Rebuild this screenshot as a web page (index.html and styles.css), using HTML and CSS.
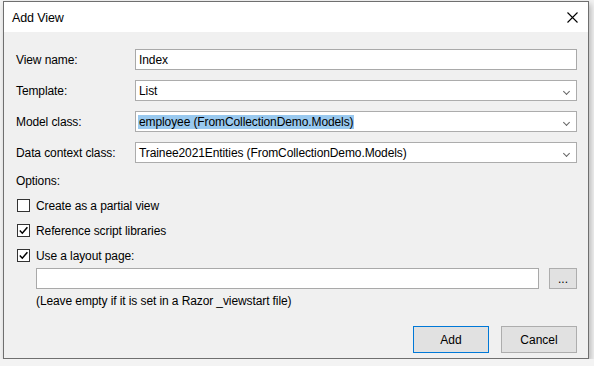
FILE: index.html
```html
<!DOCTYPE html>
<html lang="en">
<head>
  <meta charset="UTF-8">
  <meta name="viewport" content="width=device-width, initial-scale=1">
  <title>Add View</title>
  <link rel="stylesheet" href="styles.css">
</head>
<body>

  <div class="dialog">
    <header class="titlebar">
      <span class="title">Add View</span>
      <svg class="close" width="11" height="11" viewBox="0 0 11 11">
        <path d="M0.5 0.5 L10.5 10.5 M10.5 0.5 L0.5 10.5" stroke="#000" stroke-width="1.1" fill="none"/>
      </svg>
    </header>

    <main class="content">
      <div class="form">
        <label>View name:</label>
        <div class="field">Index</div>

        <label>Template:</label>
        <div class="field select">List<span class="chev"></span></div>

        <label>Model class:</label>
        <div class="field select"><span class="selected">employee (FromCollectionDemo.Models)</span><span class="chev"></span></div>

        <label>Data context class:</label>
        <div class="field select">Trainee2021Entities (FromCollectionDemo.Models)<span class="chev"></span></div>
      </div>

      <div class="options-label">Options:</div>

      <div class="check"><span class="box"></span>Create as a partial view</div>
      <div class="check">
        <span class="box"><svg width="11" height="11" viewBox="0 0 11 11"><path d="M1.8 5.6 L4.3 8.2 L9.4 2.2" stroke="#000" stroke-width="1.5" fill="none"/></svg></span>Reference script libraries
      </div>
      <div class="check">
        <span class="box"><svg width="11" height="11" viewBox="0 0 11 11"><path d="M1.8 5.6 L4.3 8.2 L9.4 2.2" stroke="#000" stroke-width="1.5" fill="none"/></svg></span>Use a layout page:
      </div>

      <div class="layout-row">
        <div class="field"></div>
        <button class="btn small">...</button>
      </div>
      <div class="hint">(Leave empty if it is set in a Razor _viewstart file)</div>

      <div class="actions">
        <button class="btn default">Add</button>
        <button class="btn">Cancel</button>
      </div>
    </main>
  </div>

</body>
</html>
```

FILE: styles.css
```css
body {
  margin: 0;
  background: #f3f3f3;
  font-family: "Liberation Sans", Arial, sans-serif;
  font-size: 12px;
  letter-spacing: -0.1px;
  color: #000;
}
.dialog {
  width: 584px;
  height: 356px;
  margin: 1px 0 0 3px;
  border: 1px solid #6f6f6f;
  background: #f0f0f0;
  box-shadow: 2px 3px 6px rgba(0, 0, 0, 0.25);
  display: flex;
  flex-direction: column;
}
.titlebar {
  height: 30px;
  background: #fff;
  display: flex;
  align-items: center;
  justify-content: space-between;
  padding: 0 10px 0 8px;
}
.title {
  font-size: 12.5px;
  margin-top: 1px;
}
.close {
  display: block;
}
.content {
  flex: 1;
  padding: 17px 11px 0 12px;
  display: flex;
  flex-direction: column;
}
.form {
  display: grid;
  grid-template-columns: 119px 1fr;
  grid-auto-rows: 21px;
  row-gap: 10px;
  align-items: center;
}
.field {
  height: 21px;
  box-sizing: border-box;
  border: 1px solid #a9a9a9;
  background: #fff;
  padding: 0 3px;
  display: flex;
  align-items: center;
  position: relative;
}
.select {
  border-color: #acacac;
}
.selected {
  background: #99c9ef;
  margin-left: -1px;
  padding: 0 1px;
}
.chev {
  position: absolute;
  right: 7px;
  top: 8px;
  width: 4px;
  height: 4px;
  border-right: 1px solid #666;
  border-bottom: 1px solid #666;
  transform: rotate(45deg);
}
.options-label {
  margin-top: 11px;
  height: 15px;
}
.check {
  display: flex;
  align-items: center;
  gap: 6px;
  height: 13px;
  margin-top: 10px;
  margin-left: 1px;
}
.check + .check {
  margin-top: 12px;
}
.box {
  width: 11px;
  height: 11px;
  border: 1px solid #333;
  background: #fff;
}
.box svg {
  display: block;
}
.layout-row {
  display: flex;
  gap: 10px;
  margin: 6px 0 0 20px;
}
.layout-row .field {
  flex: 1;
}
.hint {
  margin: 5px 0 0 20px;
}
.btn {
  font-family: inherit;
  font-size: 12px;
  color: #000;
  background: #e1e1e1;
  border: 1px solid #adadad;
  box-sizing: border-box;
  padding: 0;
}
.btn.small {
  width: 28px;
  height: 21px;
  line-height: 14px;
}
.actions {
  margin-top: auto;
  margin-bottom: 5px;
  display: flex;
  justify-content: flex-end;
  gap: 12px;
}
.actions .btn {
  width: 76px;
  height: 27px;
}
.btn.default {
  border-color: #0078d7;
}
```
